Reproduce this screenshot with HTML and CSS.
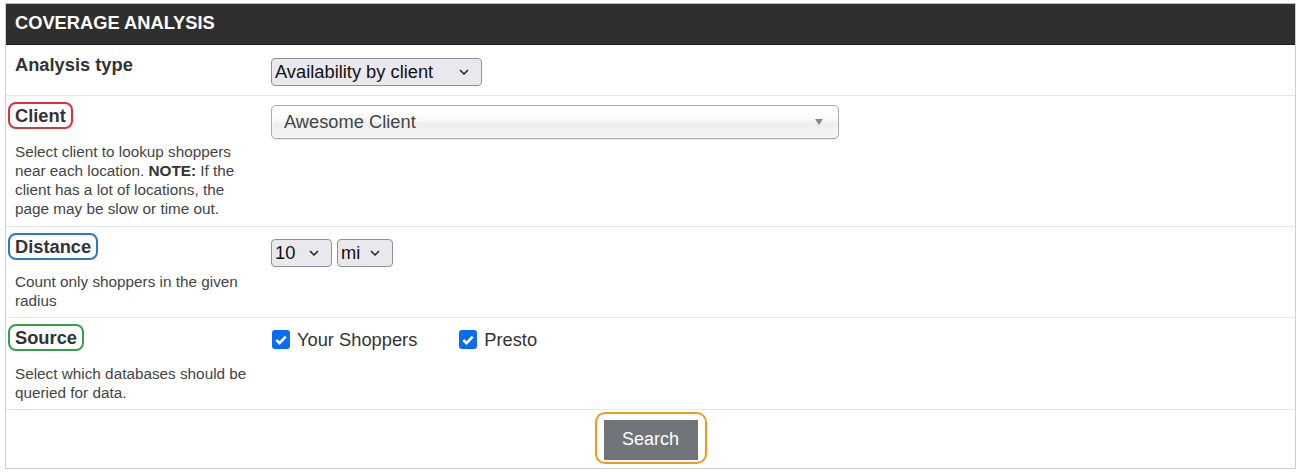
FILE: index.html
```html
<!DOCTYPE html>
<html>
<head>
<meta charset="utf-8">
<link rel="stylesheet" href="styles.css">
</head>
<body>
<div class="panel">
  <div class="panel-head">COVERAGE ANALYSIS</div>

  <div class="row row-type">
    <div class="label-cell"><span class="label">Analysis type</span></div>
    <div class="ctrl-cell">
      <div class="select sel-type"><span>Availability by client</span>
        <svg class="chev" width="10" height="6" viewBox="0 0 10 6"><path d="M1 1l4 4 4-4" fill="none" stroke="#222" stroke-width="1.5"/></svg>
      </div>
    </div>
  </div>

  <div class="row row-client">
    <div class="label-cell">
      <span class="label boxed red">Client</span>
      <p class="desc">Select client to lookup shoppers near each location. <b>NOTE:</b> If the client has a lot of locations, the page may be slow or time out.</p>
    </div>
    <div class="ctrl-cell">
      <div class="chosen"><span>Awesome Client</span>
        <svg class="tri" width="8" height="6" viewBox="0 0 8 6"><path d="M0 0h8L4 6z" fill="#888"/></svg>
      </div>
    </div>
  </div>

  <div class="row row-dist">
    <div class="label-cell">
      <span class="label boxed blue">Distance</span>
      <p class="desc">Count only shoppers in the given radius</p>
    </div>
    <div class="ctrl-cell">
      <div class="sel-group">
        <div class="select sel-num"><span>10</span>
          <svg class="chev" width="10" height="6" viewBox="0 0 10 6"><path d="M1 1l4 4 4-4" fill="none" stroke="#222" stroke-width="1.5"/></svg>
        </div>
        <div class="select sel-unit"><span>mi</span>
          <svg class="chev" width="10" height="6" viewBox="0 0 10 6"><path d="M1 1l4 4 4-4" fill="none" stroke="#222" stroke-width="1.5"/></svg>
        </div>
      </div>
    </div>
  </div>

  <div class="row row-src">
    <div class="label-cell">
      <span class="label boxed green">Source</span>
      <p class="desc">Select which databases should be queried for data.</p>
    </div>
    <div class="ctrl-cell">
      <div class="checks">
        <label class="check"><span class="box"><svg width="14" height="14" viewBox="0 0 14 14"><path d="M2.3 7l3.2 3.2 6.2-6.6" fill="none" stroke="#fff" stroke-width="2.6"/></svg></span>Your Shoppers</label>
        <label class="check"><span class="box"><svg width="14" height="14" viewBox="0 0 14 14"><path d="M2.3 7l3.2 3.2 6.2-6.6" fill="none" stroke="#fff" stroke-width="2.6"/></svg></span>Presto</label>
      </div>
    </div>
  </div>

  <div class="row-submit">
    <span class="btn-ring"><button class="btn">Search</button></span>
  </div>
</div>
</body>
</html>
```

FILE: styles.css
```css
html, body {
  margin: 0;
  padding: 0;
  background: #fff;
}
body {
  font-family: "Liberation Sans", Arial, sans-serif;
  color: #333;
}
.panel {
  margin: 3px 0 0 5px;
  width: 1289px;
  border: 1px solid #cfcfcf;
  border-top-color: #bbb;
}
.panel-head {
  background: #2f2f30;
  color: #fff;
  font-weight: bold;
  font-size: 18.3px;
  height: 40px;
  line-height: 38px;
  padding-left: 9px;
  border-bottom: 1px solid #1c1c1c;
}
.row {
  display: grid;
  grid-template-columns: 265px 1fr;
  border-bottom: 1px solid #e3e8eb;
}
.label-cell {
  padding: 9px 9px 7px 9px;
}
.label {
  display: inline-block;
  font-weight: bold;
  font-size: 18.3px;
  line-height: 21px;
  color: #333;
}
.boxed {
  padding: 0 4px;
  margin: 0 -4px;
  border-radius: 5px;
  outline: 2px solid;
  outline-offset: 1px;
}
.red { outline-color: #d9343d; }
.blue { outline-color: #2b78c5; }
.green { outline-color: #35a045; }
.desc {
  margin: 15.5px 0 0 0;
  font-size: 15.3px;
  line-height: 19px;
  color: #444;
}
.desc b { color: #333; }
.ctrl-cell {
  padding-top: 9px;
}
.row-type { height: 51px; box-sizing: border-box; }
.row-type .ctrl-cell { padding-top: 13px; }
.row-dist .ctrl-cell { padding-top: 12px; }
.row-src .ctrl-cell { padding-top: 11px; }
.row-client .label-cell { padding-bottom: 8px; }

.select {
  box-sizing: border-box;
  height: 28px;
  background: #e9e9ed;
  border: 1px solid #8f8f9d;
  border-radius: 4px;
  display: flex;
  align-items: center;
  justify-content: space-between;
  padding: 0 12px 0 3px;
  font-size: 18.3px;
  color: #111;
}
.sel-type { width: 211px; }
.sel-group { display: flex; gap: 5px; }
.sel-num { width: 61px; }
.sel-unit { width: 56px; }
.chev { flex: none; }

.chosen {
  box-sizing: border-box;
  width: 568px;
  height: 34px;
  border: 1px solid #aaa;
  border-radius: 5px;
  background: linear-gradient(#fff 20%, #f6f6f6 50%, #eee 52%, #f4f4f4 100%);
  box-shadow: 0 0 3px #fff inset, 0 1px 1px rgba(0,0,0,0.1);
  display: flex;
  align-items: center;
  justify-content: space-between;
  padding: 0 15px 0 12px;
  font-size: 18.3px;
  color: #444;
}

.checks {
  display: flex;
  gap: 41px;
}
.check {
  display: flex;
  align-items: center;
  font-size: 18.3px;
  line-height: 21px;
  color: #333;
}
.box {
  width: 18px;
  height: 19px;
  margin: 0 7px 0 1px;
  background: #0a6cf0;
  border-radius: 3px;
  display: flex;
  align-items: center;
  justify-content: center;
}

.row-submit {
  display: flex;
  justify-content: center;
  padding: 2px 0 4px;
}
.btn-ring {
  display: inline-block;
  border: 2px solid #f39a1e;
  border-radius: 10px;
  padding: 6px 7px 2px;
}
.btn {
  display: block;
  width: 94px;
  height: 40px;
  border: none;
  background: #717479;
  color: #fff;
  font-family: "Liberation Sans", Arial, sans-serif;
  font-size: 18px;
  padding: 0;
  margin: 0;
}
```
